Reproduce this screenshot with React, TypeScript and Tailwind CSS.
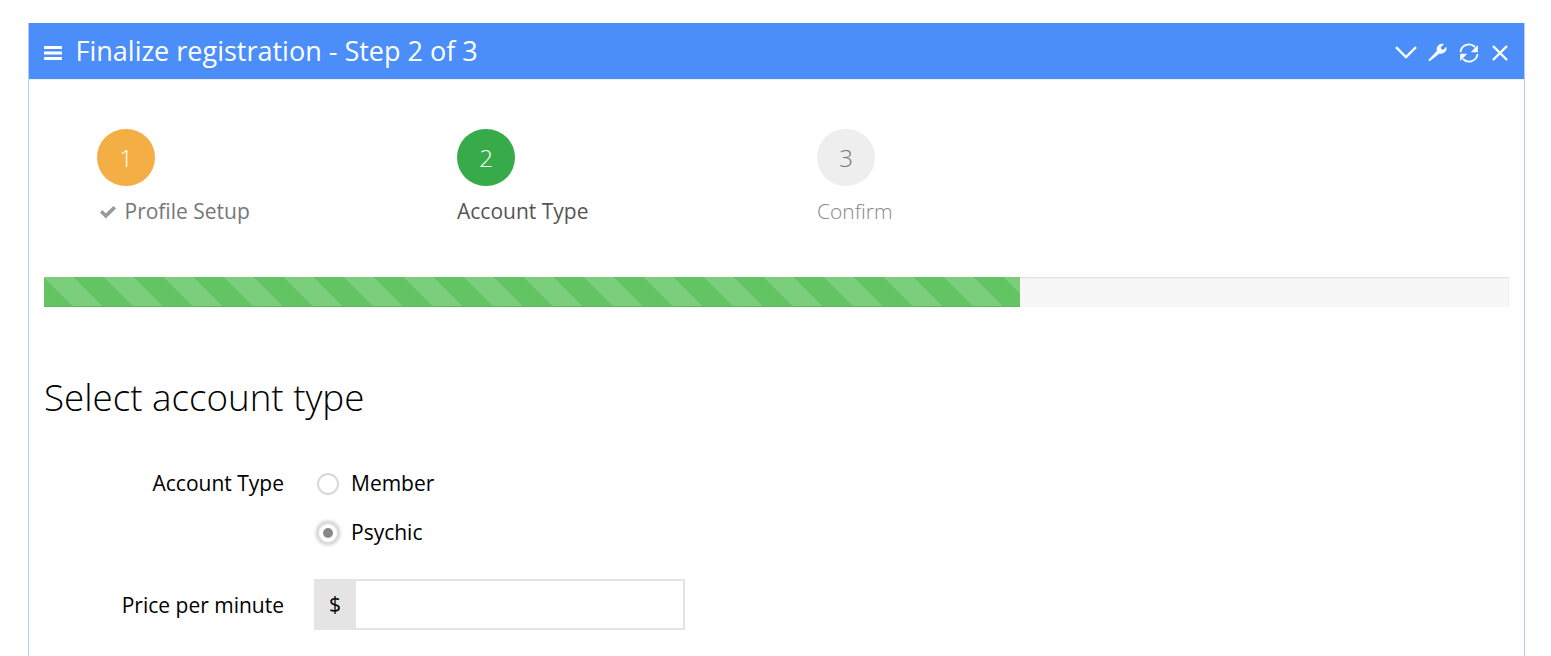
const steps = [
  { n: 1, label: 'Profile Setup', circle: 'bg-[#f3ae44] text-white', text: 'text-[#777777]', done: true },
  { n: 2, label: 'Account Type', circle: 'bg-[#37ab4a] text-white', text: 'text-[#555555]', done: false },
  { n: 3, label: 'Confirm', circle: 'bg-[#eeeeee] text-[#777777]', text: 'text-[#888888] font-light', done: false },
];

function Radio({ checked, label }: { checked?: boolean; label: string }) {
  return (
    <div className="flex items-center h-[49px]">
      <span
        className={`w-[22px] h-[22px] ml-[2px] rounded-full flex items-center justify-center bg-white border-2 ${
          checked ? 'border-[#dddddd] shadow-[0_0_4px_#aaaaaa]' : 'border-[#d8d8d8]'
        }`}
      >
        {checked && <span className="w-[10px] h-[10px] rounded-full bg-[#888888]" />}
      </span>
      <span className="ml-[12px] text-[21px] text-black">{label}</span>
    </div>
  );
}

export default function App() {
  return (
    <div className="h-[656px] overflow-hidden bg-white pt-[23px] px-[28px] font-['Open_Sans',sans-serif]">
      <div className="w-[1497px] h-[700px] border-x border-[#b6cdfb]">
        {/* Panel header */}
        <div className="h-[56px] bg-[#4b8efa] flex items-center pl-[15px] text-white">
          <svg className="w-[18px] h-[16px] mt-[3px]" viewBox="0 0 18 16" fill="white">
            <rect x="0" y="1" width="18" height="3" rx="0.5" />
            <rect x="0" y="6.5" width="18" height="3" rx="0.5" />
            <rect x="0" y="12" width="18" height="3" rx="0.5" />
          </svg>
          <h1 className="ml-[13.5px] -mt-[1px] text-[27px] leading-none">Finalize registration - Step 2 of 3</h1>
          <div className="ml-auto flex items-center mt-[3px] mr-[16px]">
            <svg className="w-[22px] h-[13px]" viewBox="0 0 22 13" fill="none" stroke="white" strokeWidth="2.4">
              <path d="M1 1.200 11 11l10-9.800" />
            </svg>
            <svg className="w-[19px] h-[19px] ml-[11px]" viewBox="0 0 18 18" fill="white">
              <path d="M1.600 17.400.3 16 8.400 7.600C7.900 5.400 8.500 3.300 10.100 2 11.500.9 13.400.5 15 1.100L12.100 4 12.600 5.900 14.500 6.400 17.300 3.500C17.900 5.200 17.500 7.100 16.300 8.400 15 9.900 12.900 10.500 10.800 10z" />
            </svg>
            <svg className="w-[20px] h-[20px] ml-[12px]" viewBox="0 0 20 20" fill="white">
              <path d="M1.500 9A8.500 8.500 0 0 1 16 4" fill="none" stroke="white" strokeWidth="1.800" />
              <path d="M18.800 2v7.200H11.800z" />
              <path d="M18.500 11A8.500 8.500 0 0 1 4 16" fill="none" stroke="white" strokeWidth="1.800" />
              <path d="M1.200 18v-7.200H8.200z" />
            </svg>
            <svg className="w-[16px] h-[16px] ml-[13px]" viewBox="0 0 16 16" fill="none" stroke="white" strokeWidth="2.400">
              <path d="M1 1l14 14M15 1 1 15" />
            </svg>
          </div>
        </div>
        <div className="h-px bg-[#eeeeee]" />

        <div className="px-[15px]">
          {/* Wizard steps */}
          <div className="flex pl-[53px] pt-[49px]">
            {steps.map((s) => (
              <div key={s.n} className="w-[360px]">
                <div className={`w-[58px] h-[57px] rounded-full flex items-center justify-center text-[24px] font-light ${s.circle}`}>
                  {s.n}
                </div>
                <div className={`mt-[12px] h-[28px] flex items-center text-[21px] ${s.text}`}>
                  {s.done && (
                    <svg className="w-[18px] h-[14px] ml-[2px] mr-[7.5px]" viewBox="0 0 18 14" fill="#999999">
                      <path d="M1 7.500 3.400 5l3.400 3.400L14.400 1 17 3.500 6.800 13.400z" />
                    </svg>
                  )}
                  {s.label}
                </div>
              </div>
            ))}
          </div>

          {/* Progress */}
          <div className="mt-[51px] h-[30px] bg-[#f7f7f7] shadow-[inset_0_1px_2px_rgba(0,0,0,0.1)]">
            <div className="h-full w-[976px] border-b border-[#5cb85c] bg-[#62c462] bg-[linear-gradient(45deg,#7bce7c_25%,transparent_25%,transparent_50%,#7bce7c_50%,#7bce7c_75%,transparent_75%,transparent)] bg-[length:60px_60px]" />
          </div>

          <h2 className="mt-[66px] text-[36.75px] leading-[48px] font-light text-black">Select account type</h2>

          {/* Form */}
          <div className="mt-[38px] flex">
            <div className="w-[240px] text-right text-[21px] text-black h-[49px] leading-[49px]">Account Type</div>
            <div className="ml-[31px]">
              <Radio label="Member" />
              <Radio checked label="Psychic" />
            </div>
          </div>
          <div className="mt-[22px] flex items-center">
            <label className="w-[240px] pt-[2px] text-right text-[21px] text-black">Price per minute</label>
            <div className="ml-[30px] w-[371px] h-[51px] flex border-2 border-[#e4e4e4]">
              <span className="w-[40px] pr-[2px] bg-[#e4e4e4] flex items-center justify-center text-[21px] text-black">$</span>
              <input className="flex-1 min-w-0 bg-white outline-none" />
            </div>
          </div>
        </div>
      </div>
    </div>
  );
}
